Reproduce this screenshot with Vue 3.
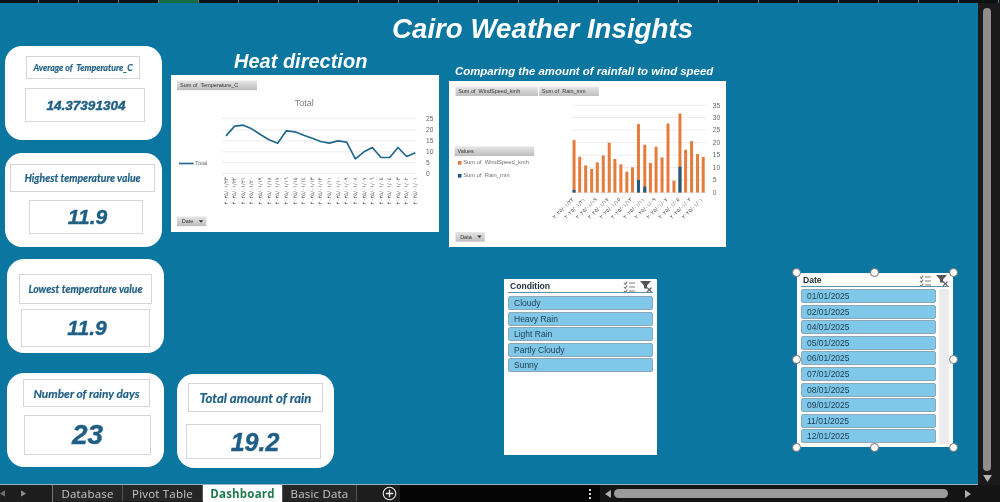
<script setup>
const cards = [
  { id: 'c1', label: 'Average of\u00a0 Temperature_C', value: '14.37391304' },
  { id: 'c2', label: 'Highest temperature value', value: '11.9' },
  { id: 'c3', label: 'Lowest temperature value', value: '11.9' },
  { id: 'c4', label: 'Number of rainy days', value: '23' },
  { id: 'c5', label: 'Total amount of rain', value: '19.2' },
]
const lineData = [[183,272],[209,243],[235,240],[260,251],[286,268],[312,284],[338,294],[364,257],[390,260],[416,270],[442,279],[467,289],[493,294],[519,287],[545,291],[571,341],[597,320],[622,307],[648,337],[674,337],[699,307],[725,334],[751,323]]
const linePoints = lineData.map(p => p.join(',')).join(' ')
const lineGrid = [220, 255, 287, 320, 352, 385]
const lineAxis = [[25,220],[20,255],[15,287],[10,320],[5,352],[0,385]]
const days = ['٢٣','٢٢','٢١','٢٠','١٩','١٨','١٧','١٦','١٥','١٤','١٣','١٢','١١','١٠','٠٩','٠٨','٠٧','٠٦','٠٥','٠٤','٠٣','٠٢','٠١']
const lineLabels = lineData.map((p, i) => ({ x: p[0], text: '٢٠٢٥/٠١/' + days[i] }))
const bars = [[387,240,390],[404,290],[422,316],[440,327],[457,307],[475,286],[493,248],[510,297],[528,313],[546,335],[563,322],[581,192,360],[600,254,380],[617,309],[634,260],[652,292],[670,190],[688,362],[706,160,320],[723,269],[741,243],[759,282],[776,291]]
const barGrid = [[35,135],[30,172],[25,210],[20,247],[15,285],[10,322],[5,360],[0,398]]
const barLabels = bars.filter((b, i) => i % 2 === 0).slice(0, 12).map((b, i) => ({ x: b[0], text: '٢٠٢٥/٠١/' + days[i * 2] }))
const conditions = ['Cloudy', 'Heavy Rain', 'Light Rain', 'Partly Cloudy', 'Sunny']
const dates = ['01/01/2025','02/01/2025','04/01/2025','05/01/2025','06/01/2025','07/01/2025','08/01/2025','09/01/2025','11/01/2025','12/01/2025']
const handles = ['tl','tm','tr','ml','mr','bl','bm','br']
const ticks = Array.from({ length: 25 }, (_, i) => i)
</script>

<template>
  <div class="app">
    <div class="ruler">
      <span v-for="t in ticks" :key="t" class="tick" :class="{ on: t === 4 }"></span>
    </div>
    <div class="middle">
      <main class="canvas">
        <h1 class="title">Cairo Weather Insights</h1>
        <h2 class="h-heat">Heat direction</h2>
        <h2 class="h-comp">Comparing the amount of rainfall to wind speed</h2>

        <section v-for="c in cards" :key="c.id" class="card" :class="c.id">
          <div class="lab">{{ c.label }}</div>
          <div class="val">{{ c.value }}</div>
        </section>

        <div class="chart chart1">
          <svg viewBox="18 90 804 470" width="268" height="157">
            <defs>
              <linearGradient id="btn" x1="0" y1="0" x2="0" y2="1">
                <stop offset="0" stop-color="#e6e6e6" />
                <stop offset="1" stop-color="#bdbdbd" />
              </linearGradient>
            </defs>
            <rect x="36" y="106" width="240" height="29" fill="url(#btn)" />
            <text x="45" y="126" class="t-btn">Sum of&nbsp; Temperature_C</text>
            <text x="418" y="183" class="t-title" text-anchor="middle">Total</text>
            <line v-for="g in lineGrid" :key="g" x1="171" x2="755" :y1="g" :y2="g" class="grid" />
            <polyline :points="linePoints" fill="none" stroke="#21678c" stroke-width="5" stroke-linejoin="round" />
            <text v-for="a in lineAxis" :key="a[0]" x="783" :y="a[1] + 7" class="t-axis">{{ a[0] }}</text>
            <text v-for="l in lineLabels" :key="l.x" class="t-date"
              :transform="`translate(${l.x + 5} 396) rotate(-90)`" text-anchor="end">{{ l.text }}</text>
            <line x1="42" x2="86" y1="355" y2="355" stroke="#21678c" stroke-width="5" />
            <text x="90" y="359" class="t-leg">Total</text>
            <rect x="36" y="514" width="88" height="29" fill="url(#btn)" />
            <text x="50" y="534" class="t-btn">Date</text>
            <path d="M101 525h14l-7 8z" fill="#333" />
          </svg>
        </div>

        <div class="chart chart2">
          <svg viewBox="12 62 831 500" width="277" height="166">
            <defs>
              <linearGradient id="btn2" x1="0" y1="0" x2="0" y2="1">
                <stop offset="0" stop-color="#e6e6e6" />
                <stop offset="1" stop-color="#bdbdbd" />
              </linearGradient>
            </defs>
            <rect x="30" y="79" width="248" height="28" fill="url(#btn2)" />
            <text x="38" y="98" class="t-btn">Sum of&nbsp; WindSpeed_kmh</text>
            <rect x="282" y="79" width="180" height="28" fill="url(#btn2)" />
            <text x="290" y="98" class="t-btn">Sum of&nbsp; Rain_mm</text>
            <rect x="27" y="259" width="240" height="29" fill="url(#btn2)" />
            <text x="36" y="279" class="t-btn">Values</text>
            <rect x="37" y="303" width="11" height="11" fill="#e57b3c" />
            <text x="53" y="313" class="t-leg">Sum of&nbsp; WindSpeed_kmh</text>
            <rect x="37" y="342" width="11" height="11" fill="#1d5c82" />
            <text x="53" y="352" class="t-leg">Sum of&nbsp; Rain_mm</text>
            <line v-for="g in barGrid" :key="g[0]" x1="380" x2="785" :y1="g[1]" :y2="g[1]" class="grid" />
            <template v-for="b in bars" :key="b[0]">
              <rect :x="b[0] - 4.5" :y="b[1]" width="9" :height="398 - b[1]" fill="#e57b3c" />
              <rect v-if="b[2]" :x="b[0] - 4.5" :y="b[2]" width="9" :height="398 - b[2]" fill="#1d5c82" />
            </template>
            <text v-for="g in barGrid" :key="'a' + g[0]" x="805" :y="g[1] + 7" class="t-axis">{{ g[0] }}</text>
            <text v-for="l in barLabels" :key="l.x" class="t-date"
              :transform="`translate(${l.x} 420) rotate(-45)`" text-anchor="end">{{ l.text }}</text>
            <rect x="30" y="517" width="88" height="29" fill="url(#btn2)" />
            <text x="44" y="537" class="t-btn">Data</text>
            <path d="M95 527h14l-7 8z" fill="#333" />
          </svg>
        </div>

        <section class="slicer s-cond">
          <header class="s-head">
            <span>Condition</span>
            <svg class="s-ic" viewBox="0 0 30 11" width="30" height="11">
              <path d="M1 2l1.300 1.300 1.900-2.600M1 6l1.300 1.300 1.900-2.600M1 10l1.300 1.300 1.900-2.600M6 2h6M6 6h6M6 10h6" fill="none" stroke="#7f7f7f" stroke-width="1.200" />
              <path d="M17 0h11l-4 4.500v3h-3v-3z" fill="#555" />
              <path d="M24 6.500l4.500 4.500M28.500 6.500l-4.500 4.500" stroke="#666" stroke-width="1.200" />
            </svg>
          </header>
          <ul class="s-list">
            <li v-for="c in conditions" :key="c">{{ c }}</li>
          </ul>
        </section>

        <section class="slicer s-date">
          <header class="s-head">
            <span>Date</span>
            <svg class="s-ic" viewBox="0 0 30 11" width="30" height="11">
              <path d="M1 2l1.300 1.300 1.900-2.600M1 6l1.300 1.300 1.900-2.600M1 10l1.300 1.300 1.900-2.600M6 2h6M6 6h6M6 10h6" fill="none" stroke="#7f7f7f" stroke-width="1.200" />
              <path d="M17 0h11l-4 4.500v3h-3v-3z" fill="#555" />
              <path d="M24 6.500l4.500 4.500M28.500 6.500l-4.500 4.500" stroke="#666" stroke-width="1.200" />
            </svg>
          </header>
          <div class="s-body">
            <ul class="s-list">
              <li v-for="d in dates" :key="d">{{ d }}</li>
            </ul>
            <div class="s-track"></div>
          </div>
          <i v-for="h in handles" :key="h" class="handle" :class="h"></i>
        </section>
      </main>
      <aside class="vbar">
        <div class="vtrack"></div>
        <svg class="varrow" viewBox="0 0 10 8" width="9" height="7"><path d="M0 0h10L5 8z" fill="#b5b5b5" /></svg>
      </aside>
    </div>
    <footer class="tabs">
      <div class="nav">
        <svg viewBox="0 0 6 8" width="5" height="7"><path d="M6 0v8L0 4z" fill="#6e6e6e" /></svg>
        <svg viewBox="0 0 6 8" width="5" height="7"><path d="M0 0v8l6-4z" fill="#8a8a8a" /></svg>
      </div>
      <div class="tab t1">Database</div>
      <div class="tab t2">Pivot Table</div>
      <div class="tab t3 active">Dashboard</div>
      <div class="tab t4">Basic Data</div>
      <div class="add">
        <svg viewBox="0 0 16 16" width="15" height="15">
          <circle cx="8" cy="8" r="6.700" fill="none" stroke="#e8e8e8" stroke-width="1.200" />
          <path d="M8 4v8M4 8h8" stroke="#e8e8e8" stroke-width="1.400" />
        </svg>
      </div>
      <div class="hs">
        <span class="dots"></span>
        <svg viewBox="0 0 6 8" width="6" height="8"><path d="M6 0v8L0 4z" fill="#b0b0b0" /></svg>
        <div class="thumb"></div>
        <svg viewBox="0 0 6 8" width="6" height="8"><path d="M0 0v8l6-4z" fill="#b0b0b0" /></svg>
      </div>
    </footer>
  </div>
</template>

<style>
html, body { margin: 0; background: #000; overflow: hidden; }
</style>

<style scoped>
.app {
  width: 1000px;
  height: 502px;
  display: flex;
  flex-direction: column;
  overflow: hidden;
  font-family: "Liberation Sans", Arial, sans-serif;
  background: #111;
  filter: blur(0.3px);
}
.ruler { height: 3px; display: flex; background: #0d1114; flex: none; }
.tick { width: 40px; flex: none; border-right: 1px solid #777; box-sizing: border-box; }
.tick:first-child { width: 39px; }
.tick.on { background: #146c43; }
.middle { flex: 1; display: flex; min-height: 0; }
.canvas {
  position: relative;
  width: 978px;
  background: #0b76a0;
  border-bottom: 1px solid #8fb6c6;
  box-sizing: border-box;
}
.title, .h-heat, .h-comp {
  position: absolute;
  margin: 0;
  color: #fff;
  font-style: italic;
  font-weight: 700;
  white-space: nowrap;
  line-height: 1;
}
.title { left: 392px; top: 12px; font-size: 27.700px; }
.h-heat { left: 234px; top: 48px; font-size: 20px; }
.h-comp { left: 455px; top: 63px; font-size: 11.400px; }

.card {
  position: absolute;
  width: 157px;
  height: 94px;
  background: #fff;
  border-radius: 17px;
}
.lab, .val {
  position: absolute;
  box-sizing: border-box;
  display: flex;
  align-items: center;
  justify-content: center;
  border: 1px solid #d4d6d8;
  color: #1f5f85;
  font-style: italic;
  font-weight: 700;
  white-space: nowrap;
}
.lab { font-family: Lato, "Liberation Sans", sans-serif; -webkit-text-stroke: 0.2px #1f5f85; }
.val { font-family: "Liberation Sans", Arial, sans-serif; -webkit-text-stroke: 0.4px #1f5f85; }
.c1 { left: 5px; top: 43px; }
.c1 .lab { left: 21px; top: 10px; width: 114px; height: 23px; font-size: 8.800px; }
.c1 .val { left: 20px; top: 42px; width: 120px; height: 34px; font-size: 13.500px; padding-left: 2px; }
.c2 { left: 5px; top: 150px; }
.c2 .lab { left: 5px; top: 11px; width: 145px; height: 28px; font-size: 10.400px; }
.c2 .val { left: 24px; top: 47px; width: 114px; height: 34px; font-size: 21px; padding-left: 3px; }
.c3 { left: 7px; top: 256px; }
.c3 .lab { left: 12px; top: 15px; width: 133px; height: 30px; font-size: 10.500px; }
.c3 .val { left: 14px; top: 50px; width: 129px; height: 38px; font-size: 21px; padding-left: 3px; }
.c4 { left: 7px; top: 370px; }
.c4 .lab { left: 16px; top: 6px; width: 127px; height: 28px; font-size: 11.900px; }
.c4 .val { left: 17px; top: 42px; width: 127px; height: 40px; font-size: 28px; }
.c5 { left: 177px; top: 371px; }
.c5 .lab { left: 11px; top: 9px; width: 135px; height: 29px; font-size: 13.200px; }
.c5 .val { left: 9px; top: 50px; width: 135px; height: 35px; font-size: 25px; padding-left: 3px; padding-top: 2px; }

.chart {
  position: absolute;
  background: #fff;
  line-height: 0;
}
.chart svg { display: block; }
.chart1 { left: 171px; top: 72px; width: 268px; height: 157px; }
.chart2 { left: 449px; top: 78px; width: 277px; height: 166px; }
.grid { stroke: #e4e4e4; stroke-width: 2; }
.t-btn { font-size: 16.500px; fill: #333; }
.t-title { font-size: 27px; fill: #7d7d7d; }
.t-axis { font-size: 20px; fill: #666; }
.t-leg { font-size: 17.500px; fill: #6d6d6d; }
.t-date { font-size: 16.500px; fill: #555; font-family: "DejaVu Sans", sans-serif; }

.slicer {
  position: absolute;
  box-sizing: border-box;
  background: #fff;
  padding: 0 4px;
  color: #1b2b36;
}
.s-cond { left: 504px; top: 276px; width: 153px; height: 176px; }
.s-date { left: 797px; top: 270px; width: 156px; height: 174px; }
.s-head {
  height: 13px;
  display: flex;
  align-items: center;
  justify-content: space-between;
  border-bottom: 1px solid #5d8ea6;
  font-size: 8.600px;
  font-weight: 700;
  padding-left: 2px;
}
.s-ic { margin-top: 2px; flex: none; }
.s-cond .s-head { margin-bottom: 3px; }
.s-date .s-head { margin-bottom: 2px; }
.s-list {
  list-style: none;
  margin: 0;
  padding: 0;
  display: flex;
  flex-direction: column;
  gap: 1.600px;
  flex: 1;
}
.s-list li {
  height: 12px;
  box-sizing: content-box;
  background: #80c8ea;
  border: 1px solid #8fa7b5;
  border-radius: 2px;
  padding-left: 5px;
  font-size: 8.500px;
  line-height: 12px;
  color: #1c3a4d;
}
.s-body { display: flex; gap: 3px; height: 155px; }
.s-track { width: 10px; background: #ececec; }
.handle {
  position: absolute;
  width: 7px;
  height: 7px;
  background: #fff;
  border: 1.500px solid #6f6f6f;
  border-radius: 50%;
}
.tl { left: -5px; top: -5px; }
.tm { left: 73px; top: -5px; }
.tr { right: -5px; top: -5px; }
.ml { left: -5px; top: 82px; }
.mr { right: -5px; top: 82px; }
.bl { left: -5px; bottom: -5px; }
.bm { left: 73px; bottom: -5px; }
.br { right: -5px; bottom: -5px; }

.vbar {
  width: 22px;
  flex: none;
  position: relative;
  background: #1a1a1a;
}
.vtrack {
  position: absolute;
  left: 5px;
  top: 5px;
  bottom: 14px;
  width: 8px;
  background: #8e8e8e;
  border-radius: 4px;
}
.varrow { position: absolute; left: 5px; bottom: 3px; }

.tabs {
  height: 17px;
  flex: none;
  display: flex;
  background: linear-gradient(90deg, #1d1d1d 0 400px, #050505 400px 600px, #141414 600px);
  color: #c8c8c8;
  font-size: 11.500px;
}
.nav {
  width: 53px;
  flex: none;
  display: flex;
  align-items: center;
  gap: 16px;
  box-sizing: border-box;
  border-right: 1px solid #777;
}
.tab {
  box-sizing: border-box;
  flex: none;
  display: flex;
  align-items: center;
  justify-content: center;
  border-right: 1px solid #555;
  font-family: "Open Sans", sans-serif;
  letter-spacing: 0.2px;
  background: #262626;
  height: 16px;
}
.t1 { width: 70px; }
.t2 { width: 80px; }
.t3 { width: 80px; }
.t4 { width: 74px; }
.tab.active {
  background: #fff;
  color: #1f7a4d;
  font-weight: 700;
  height: 17px;
}
.add {
  width: 43px;
  flex: none;
  display: flex;
  align-items: center;
  justify-content: flex-end;
  padding-right: 3px;
  box-sizing: border-box;
}
.hs {
  margin-left: 189px;
  display: flex;
  align-items: center;
  width: 382px;
  flex: none;
}
.dots {
  width: 2px;
  height: 10px;
  background: repeating-linear-gradient(#ddd 0 2px, transparent 2px 4px);
  margin-right: 14px;
}
.thumb {
  width: 338px;
  height: 9px;
  background: #9b9b9b;
  border-radius: 4.500px;
  margin: 0 17px 0 3px;
}
</style>
